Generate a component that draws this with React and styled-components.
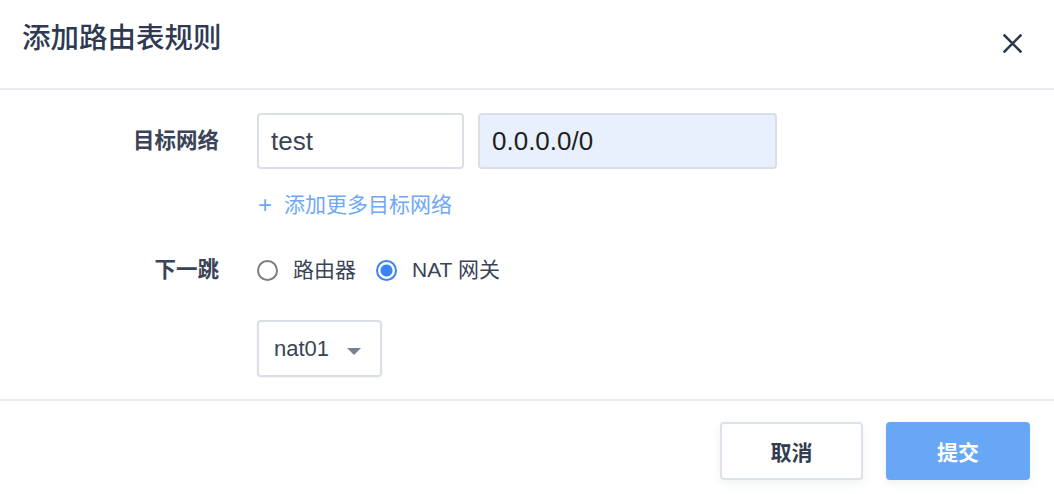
import React, { useState } from "react";
import styled, { createGlobalStyle } from "styled-components";

const GlobalStyle = createGlobalStyle`
    body {
        margin: 0;
        background: #ffffff;
        font-family: "Liberation Sans", "Noto Sans CJK SC", sans-serif;
    }
`;

const App = () => {
    const [hop, setHop] = useState("nat");
    return (
        <Dialog>
            <GlobalStyle />
            <Header>
                <Title>添加路由表规则</Title>
                <CloseButton aria-label="close">
                    <svg width="19" height="19" viewBox="0 0 19 19">
                        <path
                            d="M1.5 1.5 L17.5 17.5 M17.5 1.5 L1.5 17.5"
                            stroke="#2e3a52"
                            strokeWidth="2.6"
                            strokeLinecap="square"
                        />
                    </svg>
                </CloseButton>
            </Header>
            <Body>
                <FormRow>
                    <Label first>目标网络</Label>
                    <Controls>
                        <InputRow>
                            <Input width="207px" defaultValue="test" />
                            <Input width="299px" filled defaultValue="0.0.0.0/0" />
                        </InputRow>
                        <AddLink>
                            <Plus>+</Plus>添加更多目标网络
                        </AddLink>
                    </Controls>
                </FormRow>
                <FormRow top="37px">
                    <Label>下一跳</Label>
                    <RadioGroup>
                        <RadioOption onClick={() => setHop("router")}>
                            <RadioDot checked={hop === "router"} />
                            路由器
                        </RadioOption>
                        <RadioOption onClick={() => setHop("nat")}>
                            <RadioDot checked={hop === "nat"} />
                            NAT 网关
                        </RadioOption>
                    </RadioGroup>
                </FormRow>
                <FormRow top="36px">
                    <span />
                    <Select>
                        nat01
                        <Caret />
                    </Select>
                </FormRow>
            </Body>
            <Footer>
                <Button>取消</Button>
                <Button primary>提交</Button>
            </Footer>
        </Dialog>
    );
};

export default App;

const Dialog = styled.div`
    width: 1054px;
    height: 494px;
    background: #ffffff;
    display: flex;
    flex-direction: column;
    overflow: hidden;
`;
const Header = styled.div`
    height: 88px;
    border-bottom: 2px solid #e8ebf0;
    display: flex;
    justify-content: space-between;
    align-items: flex-start;
    padding: 0 32px 0 22px;
`;
const Title = styled.h1`
    margin: 18px 0 0;
    font-size: 28.5px;
    line-height: 40px;
    font-weight: 500;
    color: #2f3a52;
`;
const CloseButton = styled.button`
    margin-top: 34px;
    padding: 0;
    border: none;
    background: none;
    display: flex;
    cursor: pointer;
`;
const Body = styled.div`
    padding: 23px 0 22px;
    border-bottom: 2px solid #e8ebf0;
`;
const FormRow = styled.div`
    display: grid;
    grid-template-columns: 219px 1fr;
    column-gap: 38px;
    margin-top: ${(props) => props.top || "0"};
`;
const Label = styled.div`
    text-align: right;
    font-size: 21.5px;
    line-height: 28px;
    font-weight: 600;
    color: #3a4357;
    align-self: start;
    padding-top: ${(props) => (props.first ? "14px" : "0")};
`;
const Controls = styled.div`
    display: flex;
    flex-direction: column;
`;
const InputRow = styled.div`
    display: flex;
    gap: 14px;
`;
const Input = styled.input`
    box-sizing: border-box;
    width: ${(props) => props.width};
    height: 56px;
    border: 2px solid #d9dee7;
    border-radius: 4px;
    padding: 0 12px;
    font-family: "Liberation Sans", "Noto Sans CJK SC", sans-serif;
    font-size: 26px;
    color: ${(props) => (props.filled ? "#1f1f1f" : "#3b4456")};
    background: ${(props) => (props.filled ? "#e8f0fd" : "#ffffff")};
    outline: none;
`;
const AddLink = styled.div`
    margin-top: 22px;
    font-size: 21px;
    line-height: 28px;
    color: #6ea8f7;
    display: flex;
    align-items: center;
    cursor: pointer;
`;
const Plus = styled.span`
    margin: 0 12px 0 1px;
    font-size: 24px;
`;
const RadioGroup = styled.div`
    display: flex;
    gap: 20px;
    height: 28px;
    align-items: center;
`;
const RadioOption = styled.label`
    display: flex;
    align-items: center;
    gap: 15px;
    font-size: 21px;
    line-height: 28px;
    color: #3a4357;
    cursor: pointer;
`;
const RadioDot = styled.span`
    box-sizing: border-box;
    width: 21px;
    height: 21px;
    border-radius: 50%;
    border: 2px solid ${(props) => (props.checked ? "#3b82f6" : "#7d7d7d")};
    background: ${(props) =>
        props.checked
            ? "radial-gradient(circle, #3b82f6 0 5.5px, #ffffff 6.5px)"
            : "#ffffff"};
`;
const Select = styled.div`
    box-sizing: border-box;
    width: 125px;
    height: 57px;
    border: 2px solid #d9dee7;
    border-radius: 4px;
    padding: 0 19px 0 15px;
    display: flex;
    align-items: center;
    justify-content: space-between;
    font-size: 22px;
    color: #3b4456;
    box-shadow: 0 1px 3px rgba(0, 0, 0, 0.05);
`;
const Caret = styled.span`
    width: 0;
    height: 0;
    margin-top: 6px;
    border-left: 7px solid transparent;
    border-right: 7px solid transparent;
    border-top: 7px solid #7a8190;
`;
const Footer = styled.div`
    display: flex;
    justify-content: flex-end;
    gap: 23px;
    padding: 21px 24px 0;
`;
const Button = styled.button`
    box-sizing: border-box;
    width: ${(props) => (props.primary ? "144px" : "143px")};
    height: 58px;
    border-radius: 4px;
    border: 2px solid ${(props) => (props.primary ? "#68a6f6" : "#dde2ea")};
    background: ${(props) => (props.primary ? "#68a6f6" : "#ffffff")};
    color: ${(props) => (props.primary ? "#ffffff" : "#333c4f")};
    font-family: "Liberation Sans", "Noto Sans CJK SC", sans-serif;
    font-size: 21px;
    font-weight: 600;
    box-shadow: 0 3px 8px rgba(40, 60, 90, 0.08);
    cursor: pointer;
`;
